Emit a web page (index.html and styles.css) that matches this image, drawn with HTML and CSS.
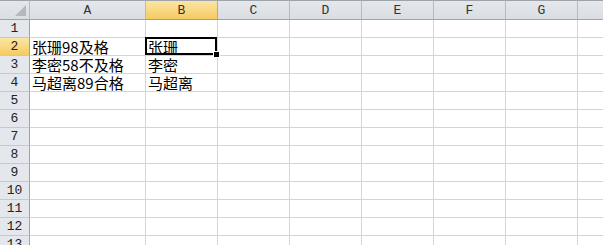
FILE: index.html
```html
<!DOCTYPE html>
<html>
<head>
    <title>Sheet1</title>
    <link rel="stylesheet" href="styles.css">
</head>
<body>
    <div class="sheet">
        <div class="corner"><span class="tri"></span></div>
        <div class="col-head">A</div>
        <div class="col-head active">B</div>
        <div class="col-head">C</div>
        <div class="col-head">D</div>
        <div class="col-head">E</div>
        <div class="col-head">F</div>
        <div class="col-head">G</div>
        <div class="col-head last"></div>

        <div class="row-head">1</div>
        <div class="cell"></div><div class="cell"></div><div class="cell"></div><div class="cell"></div><div class="cell"></div><div class="cell"></div><div class="cell"></div><div class="cell last"></div>

        <div class="row-head active">2</div>
        <div class="cell">张珊98及格</div><div class="cell selected">张珊<span class="handle"></span></div><div class="cell"></div><div class="cell"></div><div class="cell"></div><div class="cell"></div><div class="cell"></div><div class="cell last"></div>

        <div class="row-head">3</div>
        <div class="cell">李密58不及格</div><div class="cell">李密</div><div class="cell"></div><div class="cell"></div><div class="cell"></div><div class="cell"></div><div class="cell"></div><div class="cell last"></div>

        <div class="row-head">4</div>
        <div class="cell">马超离89合格</div><div class="cell">马超离</div><div class="cell"></div><div class="cell"></div><div class="cell"></div><div class="cell"></div><div class="cell"></div><div class="cell last"></div>

        <div class="row-head">5</div>
        <div class="cell"></div><div class="cell"></div><div class="cell"></div><div class="cell"></div><div class="cell"></div><div class="cell"></div><div class="cell"></div><div class="cell last"></div>

        <div class="row-head">6</div>
        <div class="cell"></div><div class="cell"></div><div class="cell"></div><div class="cell"></div><div class="cell"></div><div class="cell"></div><div class="cell"></div><div class="cell last"></div>

        <div class="row-head">7</div>
        <div class="cell"></div><div class="cell"></div><div class="cell"></div><div class="cell"></div><div class="cell"></div><div class="cell"></div><div class="cell"></div><div class="cell last"></div>

        <div class="row-head">8</div>
        <div class="cell"></div><div class="cell"></div><div class="cell"></div><div class="cell"></div><div class="cell"></div><div class="cell"></div><div class="cell"></div><div class="cell last"></div>

        <div class="row-head">9</div>
        <div class="cell"></div><div class="cell"></div><div class="cell"></div><div class="cell"></div><div class="cell"></div><div class="cell"></div><div class="cell"></div><div class="cell last"></div>

        <div class="row-head">10</div>
        <div class="cell"></div><div class="cell"></div><div class="cell"></div><div class="cell"></div><div class="cell"></div><div class="cell"></div><div class="cell"></div><div class="cell last"></div>

        <div class="row-head">11</div>
        <div class="cell"></div><div class="cell"></div><div class="cell"></div><div class="cell"></div><div class="cell"></div><div class="cell"></div><div class="cell"></div><div class="cell last"></div>

        <div class="row-head">12</div>
        <div class="cell"></div><div class="cell"></div><div class="cell"></div><div class="cell"></div><div class="cell"></div><div class="cell"></div><div class="cell"></div><div class="cell last"></div>

        <div class="row-head">13</div>
        <div class="cell"></div><div class="cell"></div><div class="cell"></div><div class="cell"></div><div class="cell"></div><div class="cell"></div><div class="cell"></div><div class="cell last"></div>
    </div>
</body>
</html>
```

FILE: styles.css
```css
body {
    margin: 0;
    background-color: #fff;
    overflow: hidden;
}
.sheet {
    display: grid;
    grid-template-columns: 30px 116px repeat(6, 72px) 1fr;
    grid-template-rows: 20px;
    grid-auto-rows: 18px;
    width: 603px;
    height: 245px;
    overflow: hidden;
    font-family: "Noto Sans CJK SC", sans-serif;
}
.corner,
.col-head {
    background: linear-gradient(#e4e7eb, #dadee3);
    border-top: 1px solid #9ea3a8;
    border-bottom: 1px solid #9ea3a8;
    border-right: 1px solid #b7bcc1;
    box-sizing: border-box;
}
.corner {
    position: relative;
}
.tri {
    position: absolute;
    right: 3px;
    bottom: 3px;
    width: 0;
    height: 0;
    border-left: 11px solid transparent;
    border-bottom: 11px solid #b5b9bd;
}
.col-head {
    font-family: "Liberation Mono", monospace;
    font-size: 13px;
    color: #333;
    text-align: center;
    line-height: 19px;
}
.col-head.active {
    background: linear-gradient(#fbe6a4, #f5cb62);
    border-bottom-color: #c29b47;
    border-right-color: #c9a85f;
}
.col-head.last {
    border-right: none;
}
.row-head {
    background-color: #e4e7eb;
    border-right: 1px solid #9ea3a8;
    border-bottom: 1px solid #c5c9ce;
    box-sizing: border-box;
    font-family: "Liberation Mono", monospace;
    font-size: 13px;
    color: #222;
    text-align: center;
    line-height: 18px;
}
.row-head.active {
    background: linear-gradient(#fbe6a4, #f5cb62);
    border-right-color: #c29b47;
}
.cell {
    border-right: 1px solid #d4d4d4;
    border-bottom: 1px solid #d4d4d4;
    box-sizing: border-box;
    font-size: 15px;
    line-height: 17px;
    padding-left: 2px;
    white-space: nowrap;
    color: #000;
}
.cell.last {
    border-right: none;
}
.selected {
    position: relative;
}
.selected::before {
    content: "";
    position: absolute;
    left: -1px;
    top: -1px;
    right: 0;
    bottom: 0;
    border: 2px solid #000;
}
.handle {
    position: absolute;
    right: -3px;
    bottom: -3px;
    width: 5px;
    height: 5px;
    background-color: #000;
    border: 1px solid #fff;
}
```
